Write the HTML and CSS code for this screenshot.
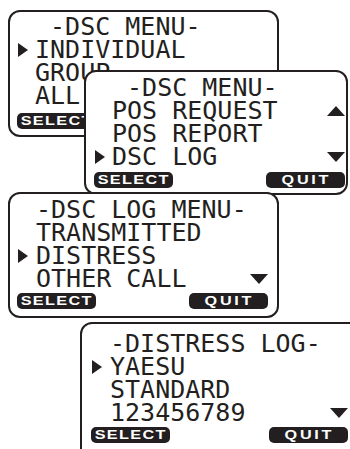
FILE: index.html
```html
<!DOCTYPE html>
<html>
<head>
    <title>DSC Menu Screens</title>
    <link rel="stylesheet" href="styles.css">
</head>
<body>
    <!-- screen 1: main DSC menu -->
    <div class="panel p1">
        <div class="row"><span class="mark"></span><span class="indent">-DSC MENU-</span></div>
        <div class="row"><span class="mark"><svg width="10" height="14"><polygon points="0,0 10,7 0,14"/></svg></span><span>INDIVIDUAL</span></div>
        <div class="row"><span class="mark"></span><span>GROUP</span></div>
        <div class="row"><span class="mark"></span><span>ALL</span></div>
        <div class="keys">
            <span class="key"><span>SELECT</span></span>
        </div>
    </div>

    <!-- screen 2: scrolled to DSC LOG -->
    <div class="panel p2">
        <div class="row"><span class="mark"></span><span class="indent">-DSC MENU-</span></div>
        <div class="row"><span class="mark"></span><span>POS REQUEST</span><span class="arrow"><svg width="18" height="10"><polygon points="0,10 9,0 18,10"/></svg></span></div>
        <div class="row"><span class="mark"></span><span>POS REPORT</span></div>
        <div class="row"><span class="mark"><svg width="10" height="14"><polygon points="0,0 10,7 0,14"/></svg></span><span>DSC LOG</span><span class="arrow"><svg width="18" height="10"><polygon points="0,0 18,0 9,10"/></svg></span></div>
        <div class="keys">
            <span class="key"><span>SELECT</span></span>
            <span class="key quit"><span>QUIT</span></span>
        </div>
    </div>

    <!-- screen 3: DSC log menu -->
    <div class="panel p3">
        <div class="row"><span class="mark"></span><span>-DSC LOG MENU-</span></div>
        <div class="row"><span class="mark"></span><span>TRANSMITTED</span></div>
        <div class="row"><span class="mark"><svg width="10" height="14"><polygon points="0,0 10,7 0,14"/></svg></span><span>DISTRESS</span></div>
        <div class="row"><span class="mark"></span><span>OTHER CALL</span><span class="arrow"><svg width="18" height="10"><polygon points="0,0 18,0 9,10"/></svg></span></div>
        <div class="keys">
            <span class="key"><span>SELECT</span></span>
            <span class="key quit"><span>QUIT</span></span>
        </div>
    </div>

    <!-- screen 4: distress log entry -->
    <div class="panel p4">
        <div class="row"><span class="mark"></span><span>-DISTRESS LOG-</span></div>
        <div class="row"><span class="mark"><svg width="10" height="14"><polygon points="0,0 10,7 0,14"/></svg></span><span>YAESU</span></div>
        <div class="row"><span class="mark"></span><span>STANDARD</span></div>
        <div class="row"><span class="mark"></span><span>123456789</span><span class="arrow"><svg width="18" height="10"><polygon points="0,0 18,0 9,10"/></svg></span></div>
        <div class="keys">
            <span class="key"><span>SELECT</span></span>
            <span class="key quit"><span>QUIT</span></span>
        </div>
    </div>
</body>
</html>
```

FILE: styles.css
```css
* {
    box-sizing: border-box;
}
html, body {
    margin: 0;
    overflow: hidden;
    background-color: #fff;
}
body {
    width: 350px;
    height: 449px;
    font-family: "DejaVu Sans Mono", monospace;
    color: #231f20;
}
svg {
    display: block;
    fill: #231f20;
}
.panel {
    position: relative;
    display: flex;
    flex-direction: column;
    background-color: #fff;
    border: 2px solid #231f20;
    border-radius: 12px;
}
.row {
    display: grid;
    grid-template-columns: var(--mark) 1fr 18px;
    align-items: center;
    height: 23px;
    font-size: 25px;
    line-height: 23px;
    white-space: nowrap;
}
.indent {
    padding-left: 1ch;
}
.keys {
    display: flex;
    justify-content: space-between;
    margin-top: 4px;
    margin-left: -1px;
}
.key {
    display: flex;
    align-items: center;
    justify-content: center;
    width: 79px;
    height: 16px;
    background-color: #231f20;
    color: #fff;
    border-radius: 5px;
    font: bold 12px "Liberation Sans", Arial, sans-serif;
}
.key span {
    display: inline-block;
    transform: scaleX(1.35);
    letter-spacing: 1px;
}
.key.quit span {
    letter-spacing: 2px;
    margin-right: -2px;
}

/* each screen sits a little over the one before it */
.p1 {
    --mark: 17px;
    margin: 10px 0 0 8px;
    width: 271px;
    height: 127px;
    padding: 3px 0 0 8px;
}
.p1 .keys {
    margin-top: 6px;
}
.p2 {
    --mark: 17px;
    margin: -67px 0 0 84px;
    width: 264px;
    height: 125px;
    padding: 4px 1px 0 9px;
}
.p3 {
    --mark: 18px;
    margin: -3px 0 0 8px;
    width: 271px;
    height: 126px;
    padding: 4px 9px 0 8px;
}
.p3 .keys {
    margin-top: 3px;
}
.p4 {
    --mark: 18px;
    margin: 4px 0 0 80px;
    width: 285px;
    height: 140px;
    padding: 8px 15px 0 10px;
}
.p4 .keys {
    margin-top: 3px;
}
```
